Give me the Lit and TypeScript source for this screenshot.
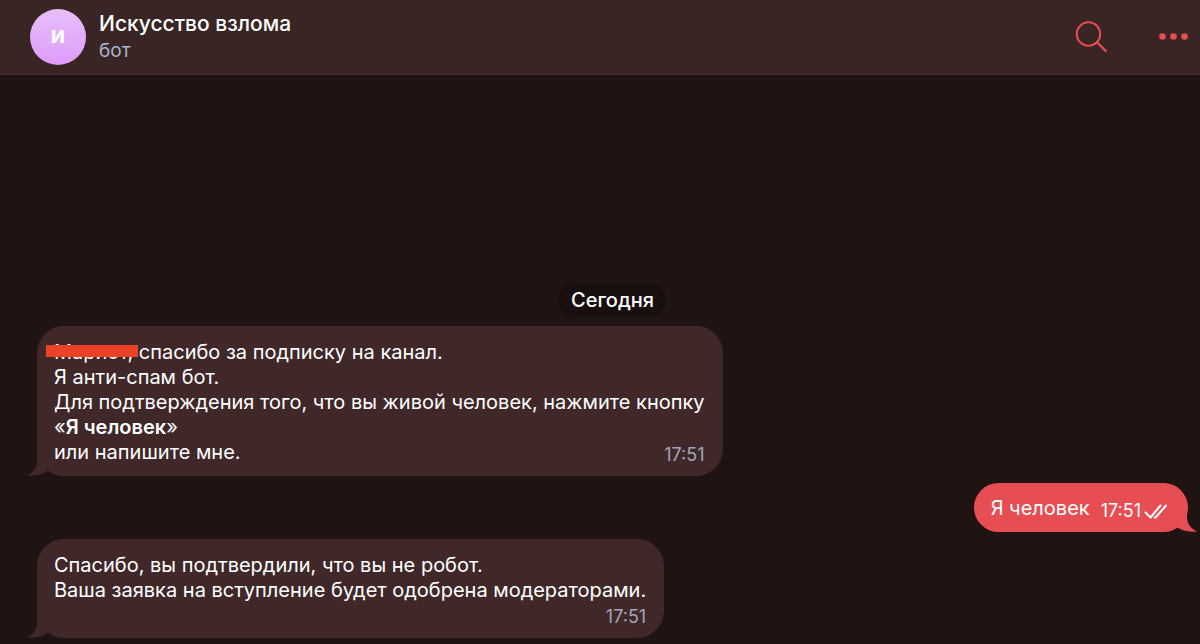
import { LitElement, html, css, svg } from "lit";
import { customElement, property } from "lit/decorators.js";

@customElement("chat-header")
class ChatHeader extends LitElement {
  static styles = css`
    :host {
      display: flex;
      align-items: center;
      box-sizing: border-box;
      height: 75px;
      padding: 0 12px 0 30px;
      background: #392524;
      border-bottom: 2px solid #452a2b;
    }
    .avatar {
      display: grid;
      place-items: center;
      width: 56px;
      height: 56px;
      border-radius: 50%;
      background: linear-gradient(#e7bff8, #e09bfa);
      color: #fff;
      font-size: 18px;
      font-weight: 800;
    }
    .who {
      flex: 1;
      margin-left: 13px;
    }
    .name {
      margin: 0;
      font-size: 21px;
      line-height: 28px;
      font-weight: 500;
      color: #fff;
    }
    .status {
      margin: 0;
      font-size: 19px;
      line-height: 26px;
      color: #a9b4ca;
    }
    .actions {
      display: flex;
      align-items: center;
      gap: 48px;
    }
    button {
      display: block;
      padding: 0;
      border: 0;
      background: none;
      color: #e94d52;
      cursor: pointer;
    }
    svg {
      display: block;
    }
  `;

  render() {
    return html`
      <div class="avatar">И</div>
      <div class="who">
        <h1 class="name">Искусство взлома</h1>
        <p class="status">бот</p>
      </div>
      <div class="actions">
        <button type="button" aria-label="Поиск">
          <svg width="36" height="36" viewBox="0 0 36 36" fill="none" stroke="currentColor" stroke-width="2" stroke-linecap="round">
            <circle cx="14.5" cy="15" r="11.7" />
            <path d="M23.200 23.500L31.800 32" stroke-width="2.4" />
          </svg>
        </button>
        <button type="button" aria-label="Ещё">
          <svg width="30" height="10" viewBox="0 0 30 10" fill="currentColor">
            <circle cx="4.500" cy="4.500" r="3.300" />
            <circle cx="15.500" cy="4.500" r="3.300" />
            <circle cx="26.500" cy="4.500" r="3.300" />
          </svg>
        </button>
      </div>
    `;
  }
}

@customElement("chat-message")
class ChatMessage extends LitElement {
  static styles = css`
    :host {
      position: relative;
      display: flex;
      flex-direction: column;
      box-sizing: border-box;
      align-self: flex-start;
      max-width: 90%;
      padding: 14px 18px 11px 17px;
      border-radius: 27px;
      background: #402829;
      color: #fff;
      font-size: 20px;
      line-height: 25px;
    }
    :host([outgoing]) {
      align-self: flex-end;
      flex-direction: row;
      align-items: flex-end;
      gap: 11px;
      padding: 13px 20px 11px 17px;
      background: #e74e53;
    }
    .meta {
      display: flex;
      align-items: center;
      align-self: flex-end;
      gap: 3px;
      margin-top: -20px;
      font-size: 18px;
      line-height: 20px;
      color: #a3a4b8;
    }
    :host([stacked]) .meta {
      margin-top: 4px;
    }
    :host([outgoing]) .meta {
      margin-top: 0;
      color: #fff;
    }
    .checks {
      display: block;
    }
    .tail {
      position: absolute;
      bottom: 0;
      left: -10px;
      fill: #402829;
    }
    :host([outgoing]) .tail {
      left: auto;
      right: -9px;
      transform: scaleX(-1);
      fill: #e74e53;
    }
  `;

  @property() time = "";
  @property({ type: Boolean, reflect: true }) outgoing = false;
  @property({ type: Boolean, reflect: true }) stacked = false;

  render() {
    const checks = svg`<path d="M1.500 9.500L6.500 14.500L16.500 2.500M10.800 14.500L12 14L22 2.500" />`;
    return html`
      <svg class="tail" width="22" height="28" viewBox="0 0 22 28" aria-hidden="true">
        <path d="M10 0V13C10 20 6 24.500 0 27.400C8 28.200 15 27 20.500 23V12Z" />
      </svg>
      <div class="body"><slot></slot></div>
      <div class="meta">
        <time>${this.time}</time>
        ${this.outgoing
          ? html`<svg class="checks" width="24" height="17" viewBox="0 0 24 17" fill="none" stroke="currentColor" stroke-width="2" stroke-linecap="round" stroke-linejoin="round" role="img" aria-label="Прочитано">${checks}</svg>`
          : null}
      </div>
    `;
  }
}

@customElement("app-root")
class AppRoot extends LitElement {
  static styles = css`
    :host {
      display: flex;
      flex-direction: column;
      box-sizing: border-box;
      min-height: 100vh;
      background: #1f1412;
      font-family: Inter, "Noto Sans", sans-serif;
    }
    .log {
      flex: 1;
      display: flex;
      flex-direction: column;
      justify-content: flex-end;
      gap: 7px;
      padding: 16px 12px 6px 37px;
      overflow: hidden;
    }
    .day {
      align-self: center;
      margin-bottom: 2px;
      padding: 1px 12px 0;
      border-radius: 17px;
      background: #190f0f;
      color: #fff;
      font-size: 20px;
      line-height: 33px;
      font-weight: 500;
    }
    .redacted {
      position: relative;
      display: inline-block;
    }
    .redacted::after {
      content: "";
      position: absolute;
      top: 5px;
      left: -8px;
      right: -5px;
      height: 12px;
      background: #ea4127;
    }
    strong {
      font-weight: 600;
    }
  `;

  render() {
    return html`
      <chat-header></chat-header>
      <main class="log">
        <div class="day">Сегодня</div>
        <chat-message time="17:51">
          <span class="redacted">Мариот,</span> спасибо за подписку на канал.<br />
          Я анти-спам бот.<br />
          Для подтверждения того, что вы живой человек, нажмите кнопку<br />
          «<strong>Я человек</strong>»<br />
          или напишите мне.
        </chat-message>
        <chat-message time="17:51" outgoing>Я человек</chat-message>
        <chat-message time="17:51" stacked>
          Спасибо, вы подтвердили, что вы не робот.<br />
          Ваша заявка на вступление будет одобрена модераторами.
        </chat-message>
      </main>
    `;
  }
}
